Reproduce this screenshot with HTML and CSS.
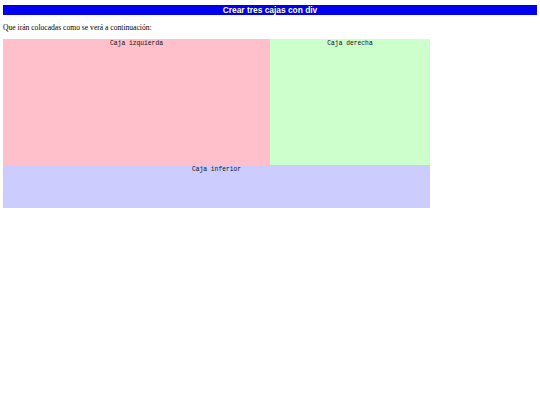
FILE: index.html
```html
<!DOCTYPE html>
<html>
<head>
<meta charset="utf-8">
<link rel="stylesheet" href="styles.css">
</head>
<body>
<h1 class="titulo">Crear tres cajas con div</h1>
<p class="intro">Que irán colocadas como se verá a continuación:</p>
<div class="cajas">
  <div class="caja izquierda">Caja izquierda</div>
  <div class="caja derecha">Caja derecha</div>
  <div class="caja inferior">Caja inferior</div>
</div>
</body>
</html>
```
FILE: styles.css
```css
html, body {
  background: #ffffff;
}
body {
  margin: 3px;
  font-family: "Liberation Serif", serif;
}
.titulo {
  margin: 2px 0 0 0;
  background: #0000ee;
  color: #ffffbb;
  font-family: "Liberation Sans", Arial, sans-serif;
  font-weight: bold;
  font-size: 8.4px;
  line-height: 10px;
  height: 10px;
  text-align: center;
}
.intro {
  margin: 8px 0 0 0;
  font-size: 7.6px;
  line-height: 9px;
  color: #000;
}
.cajas {
  margin-top: 7px;
  width: 427px;
  display: grid;
  grid-template-columns: 267px 160px;
  grid-template-rows: 126px 43px;
}
.caja {
  padding-top: 1px;
  font-family: "Liberation Mono", monospace;
  font-size: 6.3px;
  line-height: 7px;
  text-align: center;
  color: #111;
}
.izquierda {
  background: #ffc0cb;
}
.derecha {
  background: #ccffcc;
}
.inferior {
  grid-column: 1 / 3;
  background: #ccccff;
}
```
